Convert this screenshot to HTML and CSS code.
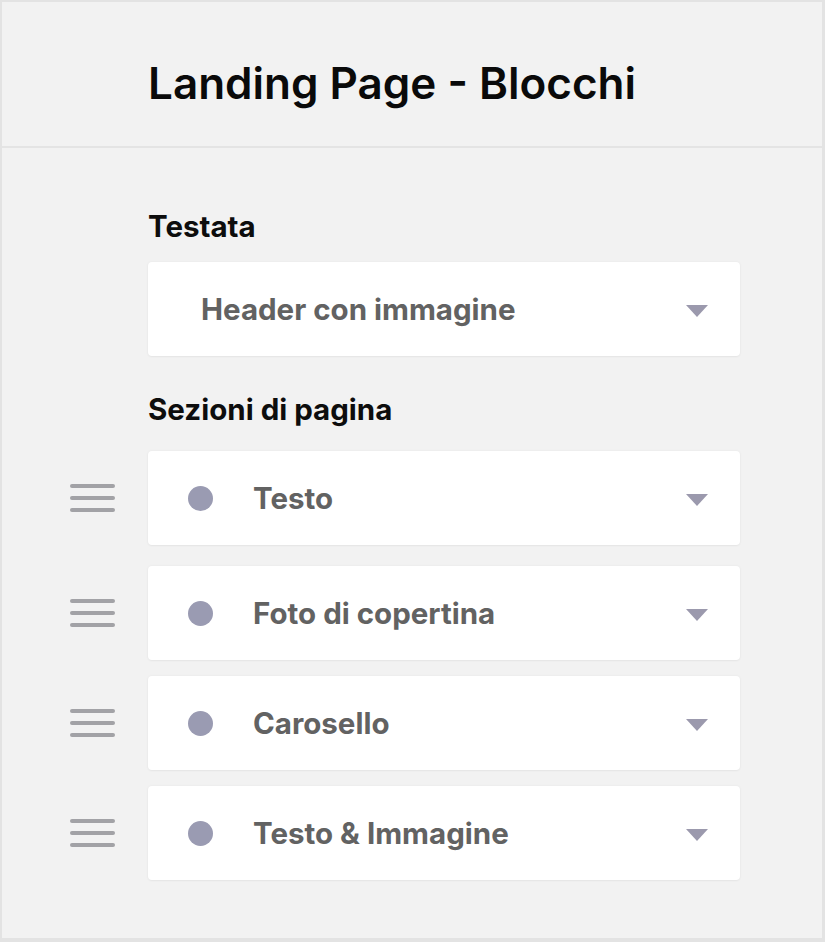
FILE: index.html
```html
<!DOCTYPE html>
<html lang="it">
<head>
<meta charset="utf-8">
<title>Landing Page - Blocchi</title>
<link rel="stylesheet" href="styles.css">
</head>
<body>
<div class="frame">
  <header class="top">
    <h1 class="title">Landing Page - Blocchi</h1>
  </header>
  <main class="content">
    <div class="label">Testata</div>
    <div class="select header-select">
      <span class="select-text">Header con immagine</span>
      <span class="caret"></span>
    </div>

    <div class="label sections-label">Sezioni di pagina</div>

    <div class="rows">
      <div class="row">
        <span class="handle"><i></i><i></i><i></i></span>
        <div class="select">
          <span class="dot"></span>
          <span class="select-text">Testo</span>
          <span class="caret"></span>
        </div>
      </div>
      <div class="row">
        <span class="handle"><i></i><i></i><i></i></span>
        <div class="select">
          <span class="dot"></span>
          <span class="select-text">Foto di copertina</span>
          <span class="caret"></span>
        </div>
      </div>
      <div class="row">
        <span class="handle"><i></i><i></i><i></i></span>
        <div class="select">
          <span class="dot"></span>
          <span class="select-text">Carosello</span>
          <span class="caret"></span>
        </div>
      </div>
      <div class="row">
        <span class="handle"><i></i><i></i><i></i></span>
        <div class="select">
          <span class="dot"></span>
          <span class="select-text">Testo &amp; Immagine</span>
          <span class="caret"></span>
        </div>
      </div>
    </div>
  </main>
</div>
</body>
</html>
```

FILE: styles.css
```css
* { box-sizing: border-box; }
html, body { margin: 0; padding: 0; }
body {
  width: 825px;
  height: 942px;
  background: #f2f2f2;
  font-family: Inter, "Liberation Sans", Arial, sans-serif;
}
.frame {
  width: 825px;
  height: 942px;
  border-style: solid;
  border-color: #e3e3e3;
  border-width: 2px 3px 4px 2px;
  background: #f2f2f2;
  display: flex;
  flex-direction: column;
}
.top {
  height: 146px;
  flex: none;
  border-bottom: 2px solid #e4e4e4;
  display: flex;
  align-items: center;
  padding-left: 146px;
}
.title {
  margin: 0;
  font-size: 44px;
  font-weight: 600;
  color: #0a0a0a;
  padding-top: 18px;
  line-height: 52px;
}
.content {
  display: flex;
  flex-direction: column;
  padding-left: 146px;
  padding-top: 62px;
}
.label {
  font-size: 29.5px;
  font-weight: 700;
  color: #0d0d0d;
  line-height: 32px;
}
.sections-label { margin-top: 37px; }
.select {
  width: 592px;
  height: 94px;
  background: #ffffff;
  border-radius: 4px;
  box-shadow: 0 0 3px rgba(0,0,0,0.05), 0 1px 2px rgba(0,0,0,0.04);
  display: flex;
  align-items: center;
  padding-left: 40px;
  padding-right: 32px;
}
.header-select {
  margin-top: 20px;
  padding-left: 53px;
}
.select-text {
  flex: 1;
  font-size: 29.5px;
  font-weight: 700;
  color: #626262;
  line-height: 36px;
}
.caret {
  width: 0;
  height: 0;
  border-left: 11px solid transparent;
  border-right: 11px solid transparent;
  border-top: 12px solid #9b99ad;
  margin-top: 4px;
}
.dot {
  width: 25px;
  height: 25px;
  border-radius: 50%;
  background: #9a9bb2;
  margin-right: 40px;
}
.rows {
  display: flex;
  flex-direction: column;
  gap: 16px;
  margin-left: -78px;
  margin-top: 26px;
}
.row {
  display: flex;
  align-items: center;
}
.row:nth-child(2) { margin-top: 5px; }
.handle {
  width: 78px;
  display: flex;
  flex-direction: column;
  gap: 8px;
}
.handle i {
  display: block;
  width: 45px;
  height: 4px;
  border-radius: 2px;
  background: #a2a2a6;
}
```
